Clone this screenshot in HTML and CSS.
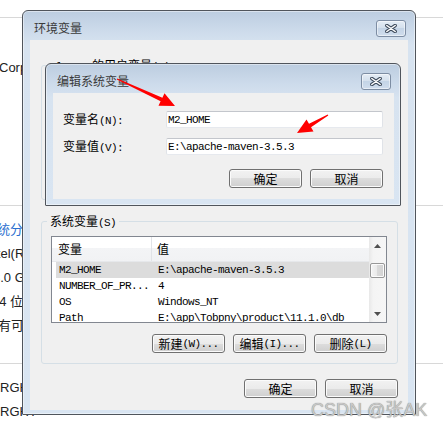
FILE: index.html
```html
<!DOCTYPE html>
<html lang="zh-CN">
<head>
<meta charset="utf-8">
<title>环境变量</title>
<link rel="stylesheet" href="styles.css">
</head>
<body>
<div class="desk">
  <div class="bg">
    <div class="hl hl1"></div>
    <div class="bgt corp">Corporation</div>
    <div class="hl hl2"></div>
    <div class="bgt blue t1">系统分类</div>
    <div class="bgt t2">Intel(R)</div>
    <div class="bgt t3">8.0 GB</div>
    <div class="bgt t4">64 位操作系统</div>
    <div class="bgt t5">没有可用</div>
    <div class="hl hl3"></div>
    <div class="bgt t6">RGHT</div>
    <div class="bgt t6">RGHT</div>
  </div>

  <div class="win w-env">
    <div class="tb">
      <span class="tt">环境变量</span>
      <span class="close"><svg width="12" height="9" viewBox="0 0 12 9"><path d="M1.8 1.5L10.2 7.5M10.2 1.5L1.8 7.5" stroke="#3d4a5b" stroke-width="3.4" stroke-linecap="round"/><path d="M1.8 1.5L10.2 7.5M10.2 1.5L1.8 7.5" stroke="#fff" stroke-width="1.5" stroke-linecap="round"/></svg></span>
    </div>
    <div class="client c-env">
      <div class="group ugroup">
        <div class="legend"><span class="m">Tlonny </span>的用户变量<span class="m">(U)</span></div>
      </div>
      <div class="group sgroup">
        <div class="legend">系统变量<span class="m">(S)</span></div>
        <div class="list">
          <div class="lv">
            <div class="lvh"><div>变量</div><div>值</div></div>
            <div class="row sel"><span>M2_HOME</span><span>E:\apache-maven-3.5.3</span></div>
            <div class="row"><span>NUMBER_OF_PR...</span><span>4</span></div>
            <div class="row"><span>OS</span><span>Windows_NT</span></div>
            <div class="row"><span>Path</span><span>E:\app\Tobpny\product\11.1.0\db</span></div>
          </div>
          <div class="sb">
            <div class="sb-btn"><svg width="7" height="4" viewBox="0 0 7 4"><path d="M0 4L3.5 0L7 4Z" fill="#505050"/></svg></div>
            <div class="sb-track"><div class="thumb"></div></div>
            <div class="sb-btn"><svg width="7" height="4" viewBox="0 0 7 4"><path d="M0 0L3.5 4L7 0Z" fill="#505050"/></svg></div>
          </div>
        </div>
        <div class="btns gbtns">
          <div class="btn">新建<span class="m">(W)...</span></div>
          <div class="btn">编辑<span class="m">(I)...</span></div>
          <div class="btn">删除<span class="m">(L)</span></div>
        </div>
      </div>
      <div class="btns obtns">
        <div class="btn">确定</div>
        <div class="btn">取消</div>
      </div>
    </div>
  </div>

  <div class="win w-edit">
    <div class="tb">
      <span class="tt">编辑系统变量</span>
      <span class="close"><svg width="12" height="9" viewBox="0 0 12 9"><path d="M1.8 1.5L10.2 7.5M10.2 1.5L1.8 7.5" stroke="#3d4a5b" stroke-width="3.4" stroke-linecap="round"/><path d="M1.8 1.5L10.2 7.5M10.2 1.5L1.8 7.5" stroke="#fff" stroke-width="1.5" stroke-linecap="round"/></svg></span>
    </div>
    <div class="client c-edit">
      <div class="field"><label>变量名<span class="m">(N):</span></label><div class="inp m">M2_HOME</div></div>
      <div class="field"><label>变量值<span class="m">(V):</span></label><div class="inp m">E:\apache-maven-3.5.3</div></div>
      <div class="btns ebtns">
        <div class="btn">确定</div>
        <div class="btn">取消</div>
      </div>
    </div>
  </div>

  <svg class="arrows" width="443" height="428" viewBox="0 0 443 428">
    <polygon points="117.2,78.5 162.4,97.7 164.5,93.2 175,106 158.5,105.8 160.6,101.3 116.8,79.5" fill="#ff0000"/>
    <polygon points="327.75,114.6 309,123.8 306.5,119.4 297,133 313.5,131.6 311,127.2 328.25,115.4" fill="#ff0000"/>
  </svg>

  <div class="wm">CSDN @张AK</div>
</div>
</body>
</html>
```
FILE: styles.css
```css
* { box-sizing: border-box; }
html, body { margin: 0; padding: 0; }
body {
  font: 12px/14px "Noto Sans CJK SC", "Liberation Sans", sans-serif;
  color: #000;
  background: #fff;
}
.desk {
  position: relative;
  width: 443px;
  height: 428px;
  overflow: hidden;
  background: #fff;
}

/* background page */
.bg {
  font: 13px/24px "Liberation Sans", "Noto Sans CJK SC", sans-serif;
  color: #222;
  white-space: nowrap;
}
.hl { height: 1px; background: #d8d8d8; }
.hl1 { margin-top: 17px; }
.corp { margin-top: 38px; margin-left: -1px; }
.hl2 { margin-top: 125px; }
.t1 { margin-top: 12px; margin-left: -16px; }
.blue { color: #2a6fcf; }
.t2 { margin-left: -14px; }
.t3 { margin-left: -7px; }
.t4 { margin-left: -8px; }
.t5 { margin-left: -15px; }
.hl3 { margin-top: 25px; }
.hl3 + .t6 { margin-top: 12px; }

/* mono latin like SimSun */
.m {
  font-family: "Liberation Mono", "DejaVu Sans Mono", monospace;
  font-size: 11px;
  letter-spacing: -0.6px;
}

/* windows */
.win {
  position: absolute;
  display: flex;
  flex-direction: column;
  border: 1px solid #50555c;
  border-radius: 6px 6px 1px 1px;
  background: linear-gradient(#bccde0 0px, #cddbeb 20px, #d7e3f0 34px, #d9e5f2 100%);
  box-shadow: inset 0 0 0 1px rgba(255, 255, 255, 0.45);
}
.w-env { left: 22px; top: 10px; width: 394px; height: 405px; }
.w-edit { left: 45px; top: 63px; width: 356px; height: 143px; }
.tb {
  height: 29px;
  flex: none;
  display: flex;
  align-items: center;
  padding: 5px 9px 0 11px;
}
.tt { color: #3a3a3a; font-size: 12px; }
.close {
  margin-left: auto;
  width: 30px;
  height: 17px;
  border: 1px solid #7d8da3;
  border-radius: 3px;
  background: linear-gradient(#e4ecf5 0%, #d3dfec 50%, #c4d4e6 50%, #d0dded 100%);
  box-shadow: inset 0 0 0 1px rgba(255, 255, 255, 0.5);
  display: flex;
  align-items: center;
  justify-content: center;
}
.client {
  flex: 1;
  background: #f0f0f0;
  margin: 0 7px 6px 7px;
}
.w-edit .client { margin: 0 6px 6px 7px; }

/* env window client */
.c-env {
  display: flex;
  flex-direction: column;
  padding: 0 10px 12px 11px;
}
.group {
  border: 1px solid #d5dfe6;
  border-radius: 3px;
  padding: 0 10px 10px 9px;
  display: flex;
  flex-direction: column;
}
.legend {
  align-self: flex-start;
  margin: -8px 0 0 -4px;
  padding: 0 3px;
  background: #f0f0f0;
  line-height: 14px;
  white-space: nowrap;
}
.ugroup { margin-top: 25px; height: 135px; }
.sgroup { margin-top: 21px; }

.list {
  margin-top: 6px;
  height: 87px;
  border: 1px solid #828790;
  background: #fff;
  display: grid;
  grid-template-columns: 1fr 17px;
}
.lv { overflow: hidden; }
.lvh {
  display: grid;
  grid-template-columns: 100px 1fr;
  height: 25px;
  background: linear-gradient(#ffffff 0%, #ffffff 45%, #f3f4f6 45%, #f1f2f4 100%);
  border-bottom: 1px solid #e6e8eb;
}
.lvh div {
  display: flex;
  align-items: center;
  padding-left: 6px;
}
.lvh div:first-child { border-right: 1px solid #e1e3e7; }
.lvh div:last-child { padding-left: 5px; }
.row {
  display: grid;
  grid-template-columns: 96px 1fr;
  height: 16px;
  margin-left: 4px;
  align-items: center;
  font: 11px/16px "Liberation Mono", "DejaVu Sans Mono", monospace;
  letter-spacing: -0.6px;
  white-space: nowrap;
}
.row.sel { background: #dcdcdc; }
.row span:first-child { padding-left: 3px; }
.row span:last-child { padding-left: 6px; }

.sb {
  display: flex;
  flex-direction: column;
  background: linear-gradient(to right, #e8e8e8 0%, #f4f4f4 25%, #f6f6f6 100%);
}
.sb-btn {
  height: 17px;
  flex: none;
  display: flex;
  align-items: center;
  justify-content: center;
}
.sb-track { flex: 1; }
.thumb {
  margin: 9px 1px 0 1px;
  height: 15px;
  border: 1px solid #979797;
  border-radius: 2px;
  background: linear-gradient(to right, #f4f4f4 0%, #e9e9e9 50%, #dadada 50%, #d2d2d2 100%);
  box-shadow: inset 0 0 0 1px #fbfbfb;
}

.btns {
  display: flex;
  justify-content: flex-end;
  gap: 8px;
}
.btn {
  width: 73px;
  height: 19px;
  border: 1px solid #707070;
  border-radius: 3px;
  background: linear-gradient(#f2f2f2 0%, #ebebeb 50%, #dddddd 50%, #cfcfcf 100%);
  box-shadow: inset 0 0 0 1px #fbfbfb;
  display: flex;
  align-items: center;
  justify-content: center;
  font-size: 12px;
  line-height: 14px;
  white-space: nowrap;
}
.gbtns { margin-top: 11px; }
.obtns { margin-top: 15px; }

/* edit window client */
.c-edit {
  display: flex;
  flex-direction: column;
  padding: 18px 11px 0 10px;
}
.field {
  display: flex;
  align-items: center;
  height: 17px;
}
.field + .field { margin-top: 10px; }
.field label { width: 103px; white-space: nowrap; }
.inp {
  flex: 1;
  height: 17px;
  border: 1px solid;
  border-color: #c3c6cc #e0e3e8 #e6e9ee #e0e3e8;
  border-radius: 2px;
  background: #fff;
  padding-left: 1px;
  display: flex;
  align-items: center;
  white-space: nowrap;
}
.ebtns { margin-top: 14px; }

/* overlays */
.arrows {
  position: absolute;
  left: 0;
  top: 0;
  pointer-events: none;
}
.wm {
  position: absolute;
  left: 311px;
  top: 400px;
  font: 18px/20px "Liberation Sans", "Noto Sans CJK SC", sans-serif;
  color: #c8c8c8;
  text-shadow: 0 0 1px #6e6e6e;
  white-space: nowrap;
}
```
